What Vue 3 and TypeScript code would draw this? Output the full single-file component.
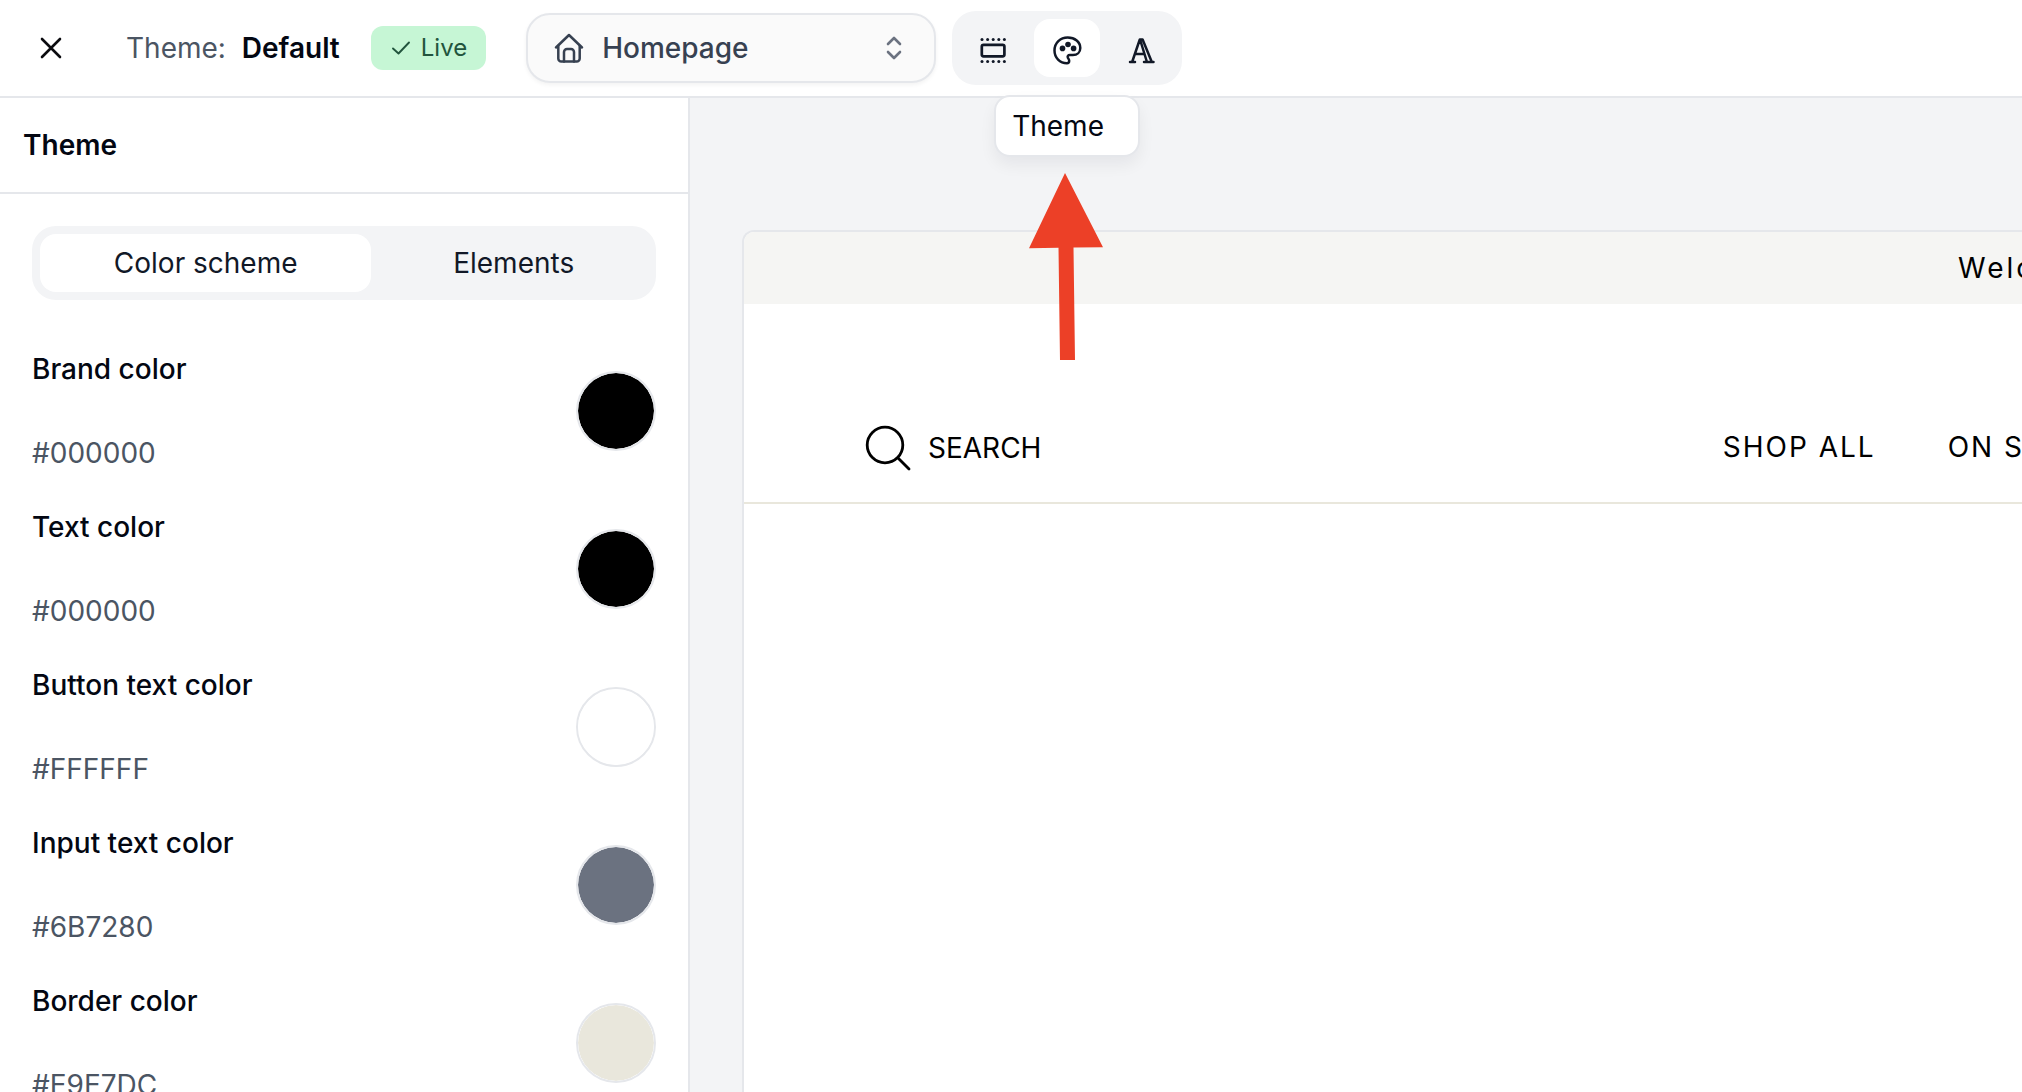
<script setup lang="ts">
import { ref } from 'vue'

interface ColorSetting {
  id: string
  label: string
  value: string
}

const page = ref('Homepage')
const activeTab = ref('Color scheme')
const tabs: string[] = ['Color scheme', 'Elements']

const colors = ref<ColorSetting[]>([
  { id: 'brand', label: 'Brand color', value: '#000000' },
  { id: 'text', label: 'Text color', value: '#000000' },
  { id: 'button-text', label: 'Button text color', value: '#FFFFFF' },
  { id: 'input-text', label: 'Input text color', value: '#6B7280' },
  { id: 'border', label: 'Border color', value: '#E9E7DC' },
])
</script>

<template>
  <div class="editor">
    <header class="topbar">
      <button class="close" type="button" aria-label="Close">
        <svg width="22" height="22" viewBox="0 0 22 22" fill="none" stroke="#0b0b0f" stroke-width="2.6" stroke-linecap="round">
          <path d="M2 2l18 18M20 2L2 20" />
        </svg>
      </button>
      <p class="theme-name">Theme: <strong>Default</strong></p>
      <span class="badge">
        <svg width="20" height="16" viewBox="0 0 20 16" fill="none" stroke="currentColor" stroke-width="1.9" stroke-linecap="round" stroke-linejoin="round">
          <path d="M2 8.5l5.5 5L18 2.500" />
        </svg>
        Live
      </span>

      <label class="page-picker">
        <svg width="30" height="32" viewBox="0 0 30 32" fill="none" stroke="#374151" stroke-width="2.5" stroke-linecap="round" stroke-linejoin="round">
          <path d="M2 15.500L15 3l13 12.500" />
          <path d="M4.300 14v12.500a3 3 0 0 0 3 3h15.400a3 3 0 0 0 3-3V14" />
          <path d="M10 29.500V20a3 3 0 0 1 3-3h4a3 3 0 0 1 3 3v9.500" />
        </svg>
        <select v-model="page" aria-label="Page">
          <option>Homepage</option>
        </select>
        <svg width="16" height="24" viewBox="0 0 16 24" fill="none" stroke="#6b7280" stroke-width="2.6" stroke-linecap="round" stroke-linejoin="round">
          <path d="M2 8l6-6 6 6M2 16l6 6 6-6" />
        </svg>
      </label>

      <div class="modes">
        <button class="mode" type="button" aria-label="Sections">
          <svg width="28" height="28" viewBox="0 0 28 28" fill="none" stroke="#111827">
            <rect x="2.800" y="8.800" width="22.600" height="11.600" rx="1.800" stroke-width="2.700" />
            <g fill="#111827" stroke="none">
              <circle v-for="n in 5" :key="'t' + n" :cx="3 + (n - 1) * 5.600" cy="3.400" r="1.500" />
              <circle v-for="n in 5" :key="'b' + n" :cx="3 + (n - 1) * 5.600" cy="25.600" r="1.500" />
            </g>
          </svg>
        </button>
        <div class="mode-wrap">
          <button class="mode active" type="button" aria-label="Theme" aria-describedby="theme-tip">
            <svg width="32" height="32" viewBox="0 0 32 32" fill="none" stroke="#111827" stroke-width="2.500" stroke-linejoin="round">
              <path d="M15.900 29.300C8.900 29.300 3.500 23.700 3.500 16.500 3.500 9 9.300 3.500 16.700 3.500c7.200 0 12.600 4.500 12.600 10.400 0 4.300-3.100 7.100-7.400 7.100h-3c-2 0-2.700 1.300-2 2.800.5 1 1.300 1.700 1.300 3 0 1.500-.8 2.500-2.300 2.500z" />
              <g fill="#111827" stroke="none">
                <circle cx="11.500" cy="14.400" r="2.800" />
                <circle cx="17" cy="10.500" r="2.800" />
                <circle cx="22.600" cy="14.400" r="2.800" />
              </g>
            </svg>
          </button>
          <span id="theme-tip" class="tooltip" role="tooltip">Theme</span>
          <svg class="pointer" width="78" height="188" viewBox="0 0 78 188" fill="#ec4027">
            <path d="M37 0L75 74.200l-29.500.3L47 187H32L30.500 74.800 1 75.300z" />
          </svg>
        </div>
        <button class="mode" type="button" aria-label="Typography">
          <svg width="28" height="28" viewBox="0 0 28 28" fill="none" stroke="#111827" stroke-width="2.500" stroke-linecap="round" stroke-linejoin="round">
            <path d="M3 26h5M17 26h9.500M5.300 25.500L12.800 3.500h2.800l9 22M13.200 4l6.600 21.500M8.500 18h9" />
          </svg>
        </button>
      </div>
    </header>

    <div class="body">
      <aside class="sidebar">
        <h2 class="panel-title">Theme</h2>
        <div class="panel">
          <div class="tabs" role="tablist">
            <button
              v-for="tab in tabs"
              :key="tab"
              type="button"
              role="tab"
              class="tab"
              :class="{ selected: tab === activeTab }"
              :aria-selected="tab === activeTab"
              @click="activeTab = tab"
            >
              {{ tab }}
            </button>
          </div>

          <div class="color-list">
            <div v-for="color in colors" :key="color.id" class="color-row">
              <div class="color-text">
                <label :for="color.id">{{ color.label }}</label>
                <input :id="color.id" v-model="color.value" class="hex" type="text" />
              </div>
              <input v-model="color.value" class="swatch" type="color" :aria-label="color.label" />
            </div>
          </div>
        </div>
      </aside>

      <main class="workspace">
        <section class="preview">
          <div class="announcement">Welcome</div>
          <div class="store-header">
            <button class="search" type="button">
              <svg width="48" height="48" viewBox="0 0 48 48" fill="none" stroke="#000" stroke-width="2.800" stroke-linecap="round">
                <circle cx="21" cy="21" r="17.800" />
                <path d="M34 34l11 11" />
              </svg>
              SEARCH
            </button>
            <nav class="store-nav">
              <a href="#">SHOP ALL</a>
              <a href="#">ON SALE</a>
            </nav>
          </div>
        </section>
      </main>
    </div>
  </div>
</template>

<style>
body {
  background: #fff;
}
</style>

<style scoped>
.editor,
.editor * {
  box-sizing: border-box;
}

.editor {
  display: flex;
  flex-direction: column;
  height: 100vh;
  overflow: hidden;
  color: #030712;
  font-family: Inter, "Liberation Sans", sans-serif;
  font-size: 28px;
  line-height: 40px;
}

button,
input,
select {
  margin: 0;
  padding: 0;
  border: 0;
  background: transparent;
  color: inherit;
  font: inherit;
}

svg {
  display: block;
  flex: none;
}

.topbar {
  display: flex;
  flex: none;
  align-items: center;
  height: 98px;
  padding-left: 32px;
  border-bottom: 2px solid #e5e7eb;
}

.close {
  display: flex;
  align-items: center;
  justify-content: center;
  width: 38px;
  height: 38px;
}

.theme-name {
  margin: 0 0 0 56px;
  color: #4b5563;
  white-space: nowrap;
}

.theme-name strong {
  margin-left: 8px;
  color: #030712;
  font-weight: 600;
}

.badge {
  display: flex;
  align-items: center;
  gap: 10px;
  height: 44px;
  margin-left: 31px;
  padding: 0 19px 0 20px;
  border-radius: 12px;
  background: #c6f6d5;
  color: #22543d;
  font-size: 24px;
  line-height: 32px;
}

.page-picker {
  display: flex;
  align-items: center;
  width: 410px;
  height: 70px;
  margin-left: 40px;
  padding: 0 32px 0 26px;
  border: 2px solid #e5e7eb;
  border-radius: 24px;
  background: #fafafa;
  box-shadow: 0 2px 4px rgba(0, 0, 0, 0.05);
  color: #374151;
}

.page-picker select {
  flex: 1;
  height: 40px;
  padding-left: 18px;
  appearance: none;
  outline: none;
  font-weight: 500;
}

.modes {
  display: flex;
  gap: 8px;
  margin-left: 16px;
  padding: 8px;
  border-radius: 24px;
  background: #f3f4f6;
}

.mode-wrap {
  position: relative;
}

.mode {
  display: flex;
  align-items: center;
  justify-content: center;
  width: 66px;
  height: 58px;
  padding-top: 4px;
  border-radius: 16px;
}

.mode.active {
  background: #fff;
}

.tooltip {
  position: absolute;
  z-index: 2;
  top: 76px;
  left: 50%;
  width: 146px;
  padding: 9px 16px;
  border: 2px solid #e5e7eb;
  border-radius: 16px;
  background: #fff;
  box-shadow: 0 8px 16px rgba(15, 23, 42, 0.06);
  transform: translateX(-50%);
}

.pointer {
  position: absolute;
  z-index: 3;
  top: 154px;
  left: 50%;
  transform: translateX(-50%);
}

.body {
  display: flex;
  flex: 1;
  min-height: 0;
}

.sidebar {
  flex: none;
  width: 690px;
  overflow: hidden;
  border-right: 2px solid #e5e7eb;
}

.panel-title {
  margin: 0;
  padding: 27px 23px;
  border-bottom: 2px solid #e5e7eb;
  font-size: 28px;
  font-weight: 600;
}

.panel {
  padding: 32px;
}

.tabs {
  display: flex;
  gap: 8px;
  padding: 8px;
  border-radius: 24px;
  background: #f3f4f6;
}

.tab {
  flex: 1 1 auto;
  height: 58px;
  border-radius: 16px;
  color: #111827;
}

.tab.selected {
  background: #fff;
}

.color-list {
  display: flex;
  flex-direction: column;
  gap: 34px;
  margin-top: 49px;
}

.color-row {
  display: flex;
  align-items: center;
}

.color-text {
  display: flex;
  flex: 1;
  flex-direction: column;
  gap: 44px;
}

.color-text label {
  font-weight: 500;
}

.hex {
  width: 100%;
  height: 40px;
  outline: none;
  color: #4b5563;
}

.swatch {
  flex: none;
  width: 80px;
  height: 80px;
  overflow: hidden;
  border: 2px solid #e5e7eb;
  border-radius: 50%;
  appearance: none;
}

.swatch::-webkit-color-swatch-wrapper {
  padding: 0;
}

.swatch::-webkit-color-swatch {
  border: 0;
  border-radius: 50%;
}

.workspace {
  display: flex;
  flex: 1;
  min-width: 0;
  padding: 132px 0 0 52px;
  overflow: hidden;
  background: #f3f4f6;
}

.preview {
  flex: 1;
  min-width: 0;
  overflow: hidden;
  border: 2px solid #e5e7eb;
  border-width: 2px 0 0 2px;
  border-radius: 12px 0 0 0;
  background: #fff;
  color: #000;
}

.announcement {
  display: flex;
  justify-content: flex-end;
  height: 72px;
  margin-right: -80px;
  padding: 16px 0;
  background: #f5f5f3;
  letter-spacing: 3px;
}

.store-header {
  display: flex;
  align-items: center;
  justify-content: space-between;
  padding: 120px 0 30px 120px;
  border-bottom: 2px solid #e9e7dc;
}

.search {
  display: flex;
  align-items: center;
  gap: 16px;
}

.store-nav {
  display: flex;
  gap: 72px;
  margin-right: -60px;
  padding-bottom: 2px;
  letter-spacing: 2px;
  white-space: nowrap;
}

.store-nav a {
  color: inherit;
  text-decoration: none;
}
</style>
